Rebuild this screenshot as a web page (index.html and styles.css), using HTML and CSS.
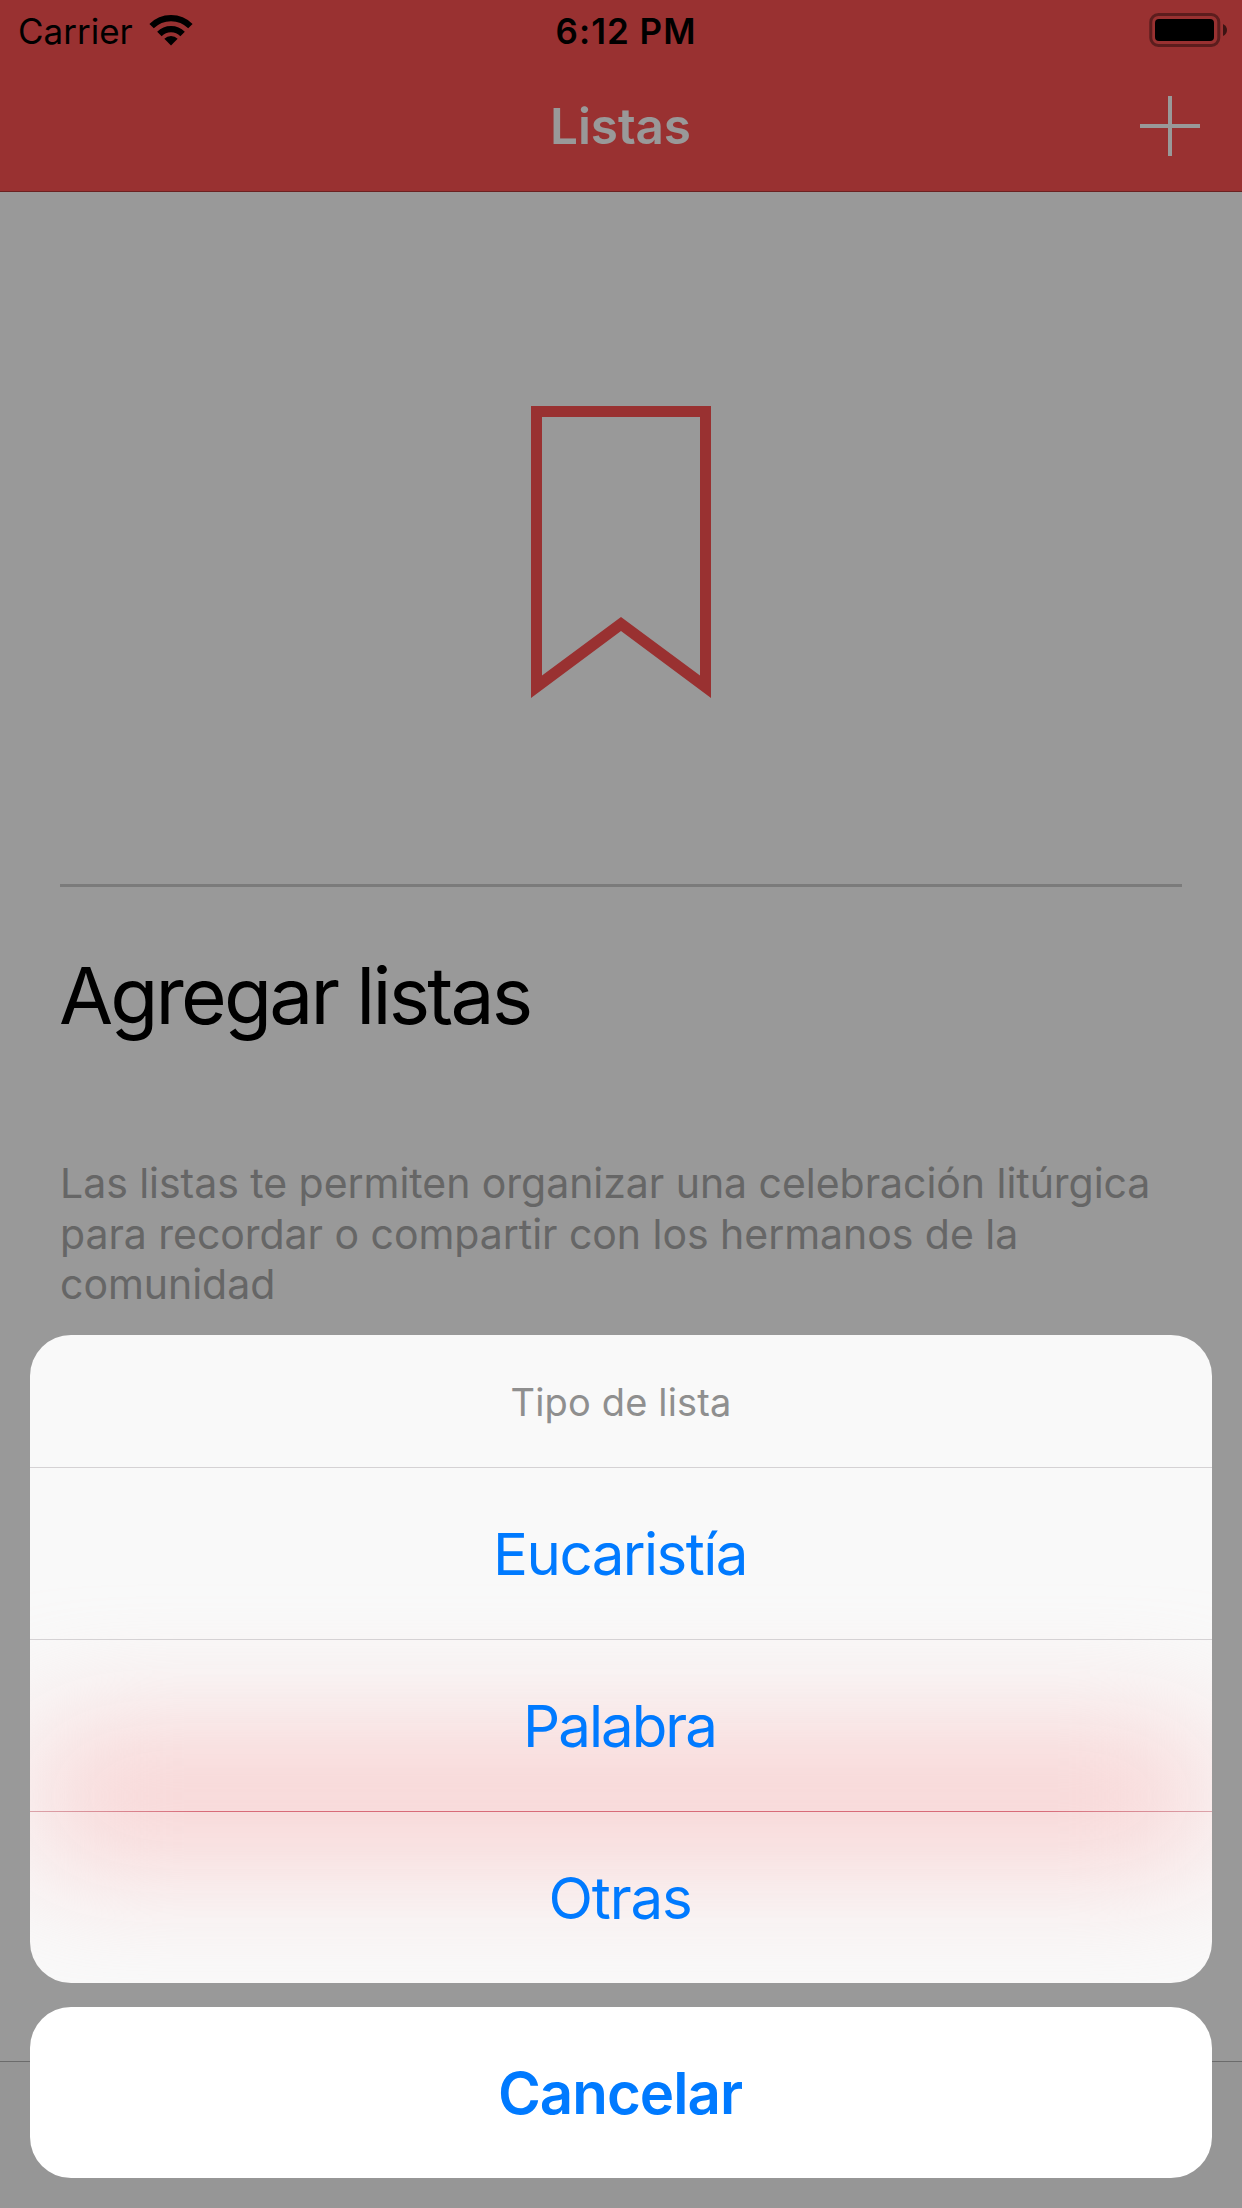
FILE: index.html
```
<!DOCTYPE html>
<html lang="es">
<head>
<meta charset="utf-8">
<title>Listas</title>
<link rel="stylesheet" href="styles.css">
</head>
<body>
<div class="app">
  <header class="header">
    <div class="status-bar">
      <div class="carrier">
        <span>Carrier</span>
        <svg class="wifi" width="44" height="32" viewBox="0 0 44 32" fill="none" stroke="#000">
          <path d="M2.6 12.1a27.4 27.4 0 0 1 38.8 0" stroke-width="6.2"/>
          <path d="M10.4 19.9a16.4 16.4 0 0 1 23.2 0" stroke-width="6.3"/>
          <path d="M22 31.5l-6.65-6.65a9.4 9.4 0 0 1 13.3 0z" fill="#000" stroke="none"/>
        </svg>
      </div>
      <span class="time">6:12 PM</span>
      <svg class="battery" width="80" height="34" viewBox="0 0 80 34">
        <rect x="1.8" y="1.5" width="68" height="31" rx="7.5" fill="none" stroke="#000" stroke-opacity=".4" stroke-width="3"/>
        <rect x="6" y="6" width="59" height="22" rx="4" fill="#000"/>
        <path d="M74 11q4 2 4 6t-4 6z" fill="#000" fill-opacity=".6"/>
      </svg>
    </div>
    <div class="nav-bar">
      <h1 class="nav-title">Listas</h1>
      <svg class="add" width="60" height="60" viewBox="0 0 60 60" stroke="#fff" stroke-width="4">
        <path d="M30 0v60M0 30h60"/>
      </svg>
    </div>
  </header>
  <main class="content">
    <svg class="bookmark" width="180" height="292" viewBox="0 0 180 292">
      <path fill="#ff5252" fill-rule="evenodd" d="M0 0H180V292L90 225L0 292ZM11 11V269.5L90 211L169 269.5V11Z"/>
    </svg>
    <hr class="divider">
    <h2 class="heading">Agregar listas</h2>
    <p class="description">Las listas te permiten organizar una celebración litúrgica para recordar o compartir con los hermanos de la comunidad</p>
  </main>
  <footer class="tab-bar"></footer>
</div>
<div class="overlay">
  <div class="sheet">
    <div class="sheet-title">Tipo de lista</div>
    <div class="option">Eucaristía</div>
    <div class="option option-palabra">Palabra</div>
    <div class="option option-otras">Otras</div>
  </div>
  <div class="cancel">Cancelar</div>
</div>
</body>
</html>
```
FILE: styles.css
```
* {
  box-sizing: border-box;
  margin: 0;
  padding: 0;
}

body {
  font-family: Inter, "Liberation Sans", sans-serif;
  color: #000;
  background: #fff;
}

svg {
  display: block;
  flex: none;
}

.app {
  display: flex;
  flex-direction: column;
  height: 2208px;
}

/* Header */
.header {
  height: 192px;
  background: #ff5252;
  border-bottom: 1px solid #b23939;
}

.status-bar {
  display: grid;
  grid-template-columns: 1fr auto 1fr;
  height: 62px;
  padding: 0 13px 0 18px;
  font-size: 35px;
  line-height: 62px;
}

.carrier {
  display: flex;
  gap: 16px;
}

.wifi {
  margin-top: 14px;
}

.time {
  font-weight: 600;
  letter-spacing: 1px;
  padding-left: 5px;
}

.battery {
  justify-self: end;
  margin-top: 13px;
}

.nav-bar {
  display: grid;
  grid-template-columns: 1fr auto 1fr;
  align-items: center;
  height: 128px;
  padding: 0 42px;
}

.nav-title {
  grid-column: 2;
  padding-right: 1px;
  font-size: 49.5px;
  font-weight: 600;
  line-height: 128px;
  letter-spacing: -0.1px;
  color: #fff;
}

.add {
  justify-self: end;
}

/* Empty state */
.content {
  flex: 1;
  padding: 214px 60px 0;
}

.bookmark {
  margin: 0 auto 186px;
}

.divider {
  height: 3px;
  border: 0;
  background: #cdcdcd;
}

.heading {
  margin: 61px 0 0 -1px;
  font-size: 78.5px;
  font-weight: 400;
  line-height: 95px;
  letter-spacing: -2.85px;
}

.description {
  margin-top: 115px;
  font-size: 41px;
  line-height: 50.5px;
  letter-spacing: -0.04px;
  color: #aaa;
}

.tab-bar {
  height: 147px;
  background: #fbfbfb;
  border-top: 1px solid #b2b2b2;
}

/* Action sheet */
.overlay {
  position: absolute;
  inset: 0 0 auto;
  height: 2208px;
  display: flex;
  flex-direction: column;
  justify-content: flex-end;
  gap: 24px;
  padding: 30px;
  background: rgba(0, 0, 0, 0.4);
  text-align: center;
}

.sheet {
  position: relative;
  isolation: isolate;
  overflow: hidden;
  border-radius: 41px;
  background: #f9f9f9;
}

.sheet::before {
  content: "";
  position: absolute;
  z-index: -1;
  top: 398px;
  left: 6px;
  right: 6px;
  height: 126px;
  background: #f8cfcf;
  filter: blur(62px);
}

.sheet-title {
  height: 132px;
  font-size: 38px;
  line-height: 134px;
  letter-spacing: 0.16px;
  color: #8f8f8f;
}

.option {
  height: 172px;
  padding-right: 2px;
  border-top: 1px solid #d5d2d4;
  font-size: 58.2px;
  line-height: 172px;
  letter-spacing: -1.55px;
  color: #007aff;
}

.option-palabra {
  padding-right: 3px;
  letter-spacing: -2px;
}

.option-otras {
  letter-spacing: -1.2px;
  border-image: linear-gradient(90deg, #dba3aa, #d86b79 15%, #d86b79 85%, #dba3aa) 1;
}

.cancel {
  height: 171px;
  padding-right: 2px;
  border-radius: 41px;
  background: #fff;
  font-size: 58.2px;
  font-weight: 600;
  line-height: 172px;
  letter-spacing: -0.98px;
  color: #007aff;
}
```
